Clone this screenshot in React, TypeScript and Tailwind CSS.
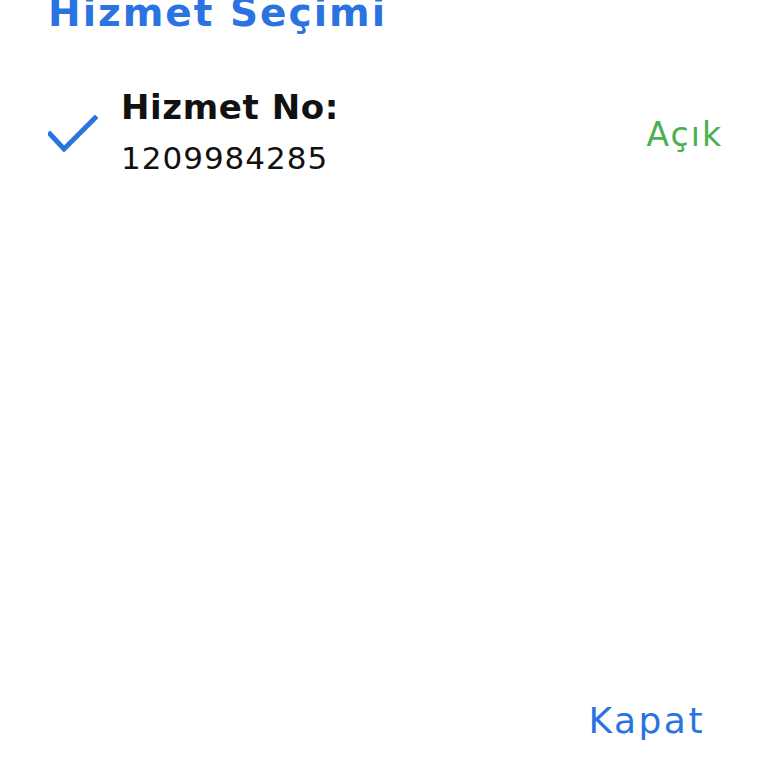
export default function App() {
  return (
    <div className="w-[768px] h-[768px] bg-white overflow-hidden flex flex-col" style={{ fontFamily: '"DejaVu Sans", sans-serif' }}>
      <div className="pl-[48px] pr-[47px] flex flex-col">
        <h1 className="text-[39px] font-bold text-[#2a73e0] leading-none mt-[-7px] tracking-[2px]">Hizmet Seçimi</h1>
        <div className="flex items-center mt-[50px]">
          <svg width="50" height="40" viewBox="0 0 50 40" className="shrink-0 mt-[6px]">
            <path d="M2 19 L16 34 L47 3" fill="none" stroke="#2a73e0" strokeWidth="5" strokeLinecap="square" />
          </svg>
          <div className="ml-[23px] flex flex-col">
            <span className="text-[34px] font-bold text-[#111] leading-[50px] tracking-[0.6px]">Hizmet No:</span>
            <span className="text-[31px] text-[#111] leading-[46px] tracking-[1px] mt-[3px]">1209984285</span>
          </div>
          <span className="ml-auto mt-[6px] text-[33px] text-[#4caf50] tracking-[2px] mr-[-2px]">Açık</span>
        </div>
      </div>
      <div className="mt-auto flex justify-end pr-[63px] pb-[20px]">
        <span className="text-[36px] text-[#2a73e0] tracking-[2.5px]">Kapat</span>
      </div>
    </div>
  );
}
